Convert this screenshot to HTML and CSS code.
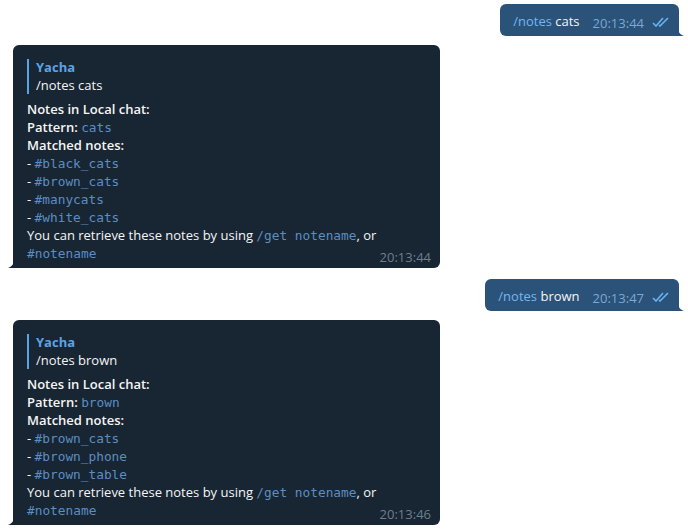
FILE: index.html
```html
<!DOCTYPE html>
<html>
<head>
<meta charset="utf-8">
<link rel="stylesheet" href="styles.css">
</head>
<body>
<div class="chat">
  <div class="row out">
    <div class="bubble-out">
      <span class="msg"><span class="cmd">/notes</span> cats</span>
      <span class="otime">20:13:44</span>
      <svg class="checks" width="18" height="10" viewBox="0 0 18 10"><path d="M1 6 L4 9 L11 1" fill="none" stroke="#6ab3f3" stroke-width="1.6"/><path d="M7 8 L8 9 L16 1" fill="none" stroke="#6ab3f3" stroke-width="1.6"/></svg>
      <svg class="tail-r" width="8" height="12" viewBox="0 0 8 12"><path d="M0 0 C0 6 2 10 7 12 L0 12 Z" fill="#2b5278"/></svg>
    </div>
  </div>
  <div class="row in">
    <div class="bubble-in">
      <div class="reply">
        <div class="rname">Yacha</div>
        <div class="rtext">/notes cats</div>
      </div>
      <div class="body">
        <div class="line b">Notes in Local chat:</div>
        <div class="line"><span class="b">Pattern:</span> <span class="mono">cats</span></div>
        <div class="line b">Matched notes:</div>
        <div class="line">- <span class="mono">#black_cats</span></div>
        <div class="line">- <span class="mono">#brown_cats</span></div>
        <div class="line">- <span class="mono">#manycats</span></div>
        <div class="line">- <span class="mono">#white_cats</span></div>
        <div class="line">You can retrieve these notes by using <span class="mono">/get notename</span>, or</div>
        <div class="line"><span class="mono">#notename</span></div>
      </div>
      <span class="itime">20:13:44</span>
      <svg class="tail-l" width="8" height="12" viewBox="0 0 8 12"><path d="M8 0 C8 6 6 10 1 12 L8 12 Z" fill="#182533"/></svg>
    </div>
  </div>
  <div class="row out">
    <div class="bubble-out">
      <span class="msg"><span class="cmd">/notes</span> brown</span>
      <span class="otime">20:13:47</span>
      <svg class="checks" width="18" height="10" viewBox="0 0 18 10"><path d="M1 6 L4 9 L11 1" fill="none" stroke="#6ab3f3" stroke-width="1.6"/><path d="M7 8 L8 9 L16 1" fill="none" stroke="#6ab3f3" stroke-width="1.6"/></svg>
      <svg class="tail-r" width="8" height="12" viewBox="0 0 8 12"><path d="M0 0 C0 6 2 10 7 12 L0 12 Z" fill="#2b5278"/></svg>
    </div>
  </div>
  <div class="row in">
    <div class="bubble-in">
      <div class="reply">
        <div class="rname">Yacha</div>
        <div class="rtext">/notes brown</div>
      </div>
      <div class="body">
        <div class="line b">Notes in Local chat:</div>
        <div class="line"><span class="b">Pattern:</span> <span class="mono">brown</span></div>
        <div class="line b">Matched notes:</div>
        <div class="line">- <span class="mono">#brown_cats</span></div>
        <div class="line">- <span class="mono">#brown_phone</span></div>
        <div class="line">- <span class="mono">#brown_table</span></div>
        <div class="line">You can retrieve these notes by using <span class="mono">/get notename</span>, or</div>
        <div class="line"><span class="mono">#notename</span></div>
      </div>
      <span class="itime">20:13:46</span>
      <svg class="tail-l" width="8" height="12" viewBox="0 0 8 12"><path d="M8 0 C8 6 6 10 1 12 L8 12 Z" fill="#182533"/></svg>
    </div>
  </div>
</div>
</body>
</html>
```

FILE: styles.css
```css
html, body {
  margin: 0;
  padding: 0;
  background: #ffffff;
}
body {
  font-family: "Open Sans", "Noto Sans", sans-serif;
  font-size: 13px;
  width: 688px;
  height: 532px;
  overflow: hidden;
}
.chat {
  display: flex;
  flex-direction: column;
  padding-top: 4px;
}
.row {
  display: flex;
}
.row.out {
  justify-content: flex-end;
  padding-right: 9px;
}
.bubble-out {
  position: relative;
  display: flex;
  align-items: center;
  height: 32px;
  box-sizing: border-box;
  background: #2b5278;
  border-radius: 6px 6px 0 6px;
  padding: 0 9px 0 13px;
  color: #f5f5f5;
  white-space: nowrap;
}
.msg {
  line-height: 18px;
  padding-top: 1px;
}
.cmd {
  color: #71b7f5;
}
.otime {
  color: #7da8d3;
  margin-left: 13px;
  margin-top: 5px;
}
.checks {
  margin-left: 8px;
  margin-top: 4px;
}
.tail-r {
  position: absolute;
  right: -6px;
  bottom: 0;
}
.row.in {
  justify-content: flex-start;
  padding-left: 13px;
}
.row.out + .row.in {
  margin-top: 9px;
}
.row.in + .row.out {
  margin-top: 11px;
}
.bubble-in {
  position: relative;
  width: 427px;
  box-sizing: border-box;
  background: #182533;
  border-radius: 6px 6px 6px 0;
  padding: 14px 14px 6px 14px;
  color: #f5f5f5;
}
.reply {
  border-left: 2px solid #5ca3e6;
  padding-left: 7px;
  line-height: 17.5px;
  margin-bottom: 6px;
}
.rname {
  color: #5ca3e6;
  font-weight: 700;
}
.rtext {
  color: #f5f5f5;
}
.body {
  line-height: 18px;
}
.line {
  height: 18px;
  white-space: nowrap;
}
.b {
  font-weight: 600;
}
.mono {
  font-family: "DejaVu Sans Mono", "Liberation Mono", monospace;
  font-size: 12.8px;
  line-height: 1;
  color: #5b8ec2;
}
.itime {
  position: absolute;
  right: 9px;
  bottom: 2px;
  color: #6d7f8f;
  line-height: 18px;
}
.tail-l {
  position: absolute;
  left: -6px;
  bottom: 0;
}
```
